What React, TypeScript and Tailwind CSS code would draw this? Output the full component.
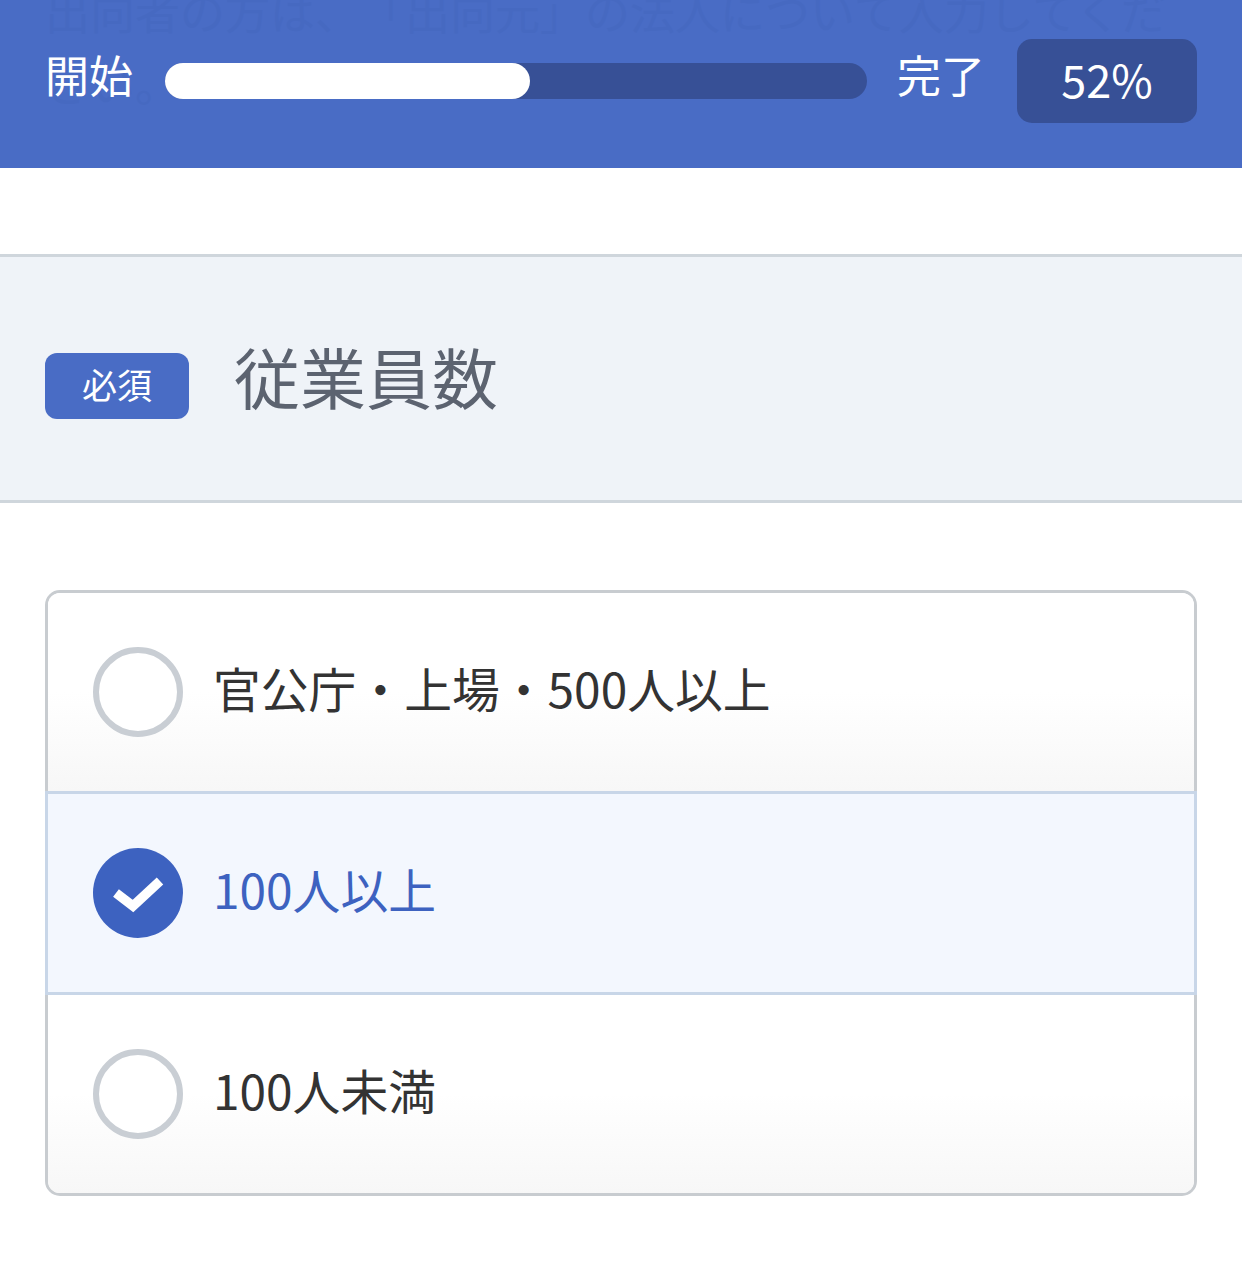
const FONT = "font-['Noto_Sans_CJK_JP','Noto_Sans',sans-serif]";

const OPTIONS = [
  { label: "官公庁・上場・500人以上", checked: false, shape: "rounded-t-[12px]" },
  { label: "100人以上", checked: true, shape: "" },
  { label: "100人未満", checked: false, shape: "rounded-b-[12px]" },
];

function ProgressHeader() {
  return (
    <div className="relative h-[168px] overflow-hidden bg-[#496cc5] pl-[45px] pr-[45px] pt-[39px]">
      {/* content scrolled under the bar, just shows through */}
      <p className="absolute left-[45px] top-[-25px] w-[1130px] text-[45px] leading-[72px] text-[#4669c1] [text-spacing-trim:space-all]">
        出向者の方は、「出向元」の法人について入力してください。
      </p>
      <div className="relative flex items-start">
        <span className="mt-[3px] w-[120px] text-[44px] leading-[64px] text-white">開始</span>
        <div className="mt-[24px] h-[36px] w-[702px] rounded-[18px] bg-[#375096]">
          <div className="h-[36px] w-[365px] rounded-[18px] bg-white" />
        </div>
        <span className="ml-[30px] mt-[3px] w-[120px] text-[44px] leading-[64px] text-white">完了</span>
        <div className="flex h-[84px] w-[180px] items-center justify-center rounded-[15px] bg-[#375096] pb-[4px] text-[45px] text-white">
          52%
        </div>
      </div>
    </div>
  );
}

function OptionRow({ label, checked, shape }: { label: string; checked: boolean; shape: string }) {
  return (
    <div
      className={
        checked
          ? "-mx-[3px] flex h-[204px] items-center gap-[30px] border-[3px] border-[#c8d6e8] bg-[#f3f7fe] pl-[45px]"
          : `flex h-[198px] items-center gap-[30px] bg-linear-to-b from-white from-50% to-[#f7f7f7] pl-[45px] ${shape}`
      }
    >
      {checked ? (
        <svg width="90" height="90" viewBox="0 0 90 90" className="shrink-0">
          <circle cx="45" cy="45" r="45" fill="#3d62c0" />
          <path d="M23 45l17 13 27-25" fill="none" stroke="#fff" strokeWidth="9.5" />
        </svg>
      ) : (
        <div className="h-[90px] w-[90px] shrink-0 rounded-full border-[6px] border-[#c9ced4] bg-white" />
      )}
      <span className={checked ? "pb-[8px] text-[47.8px] text-[#3d62c0]" : "pb-[8px] text-[47.8px] text-[#333333]"}>
        {label}
      </span>
    </div>
  );
}

export default function App() {
  return (
    <div className={`${FONT} h-[1266px] overflow-hidden bg-white`}>
      <ProgressHeader />
      <div className="mt-[86px] flex h-[249px] items-center border-y-[3px] border-[#cfd6dc] bg-[#eff3f8] pl-[45px]">
        <span className="mt-[14px] flex h-[66px] w-[144px] items-center justify-center rounded-[12px] bg-[#496cc5] pb-[2px] text-[35px] text-white">
          必須
        </span>
        <span className="mb-[8px] ml-[45px] text-[66px] leading-none text-[#5c6370]">従業員数</span>
      </div>
      <div className="mx-[45px] mt-[87px] rounded-[15px] border-[3px] border-[#c8ccd0]">
        {OPTIONS.map((o) => (
          <OptionRow key={o.label} label={o.label} checked={o.checked} shape={o.shape} />
        ))}
      </div>
    </div>
  );
}
